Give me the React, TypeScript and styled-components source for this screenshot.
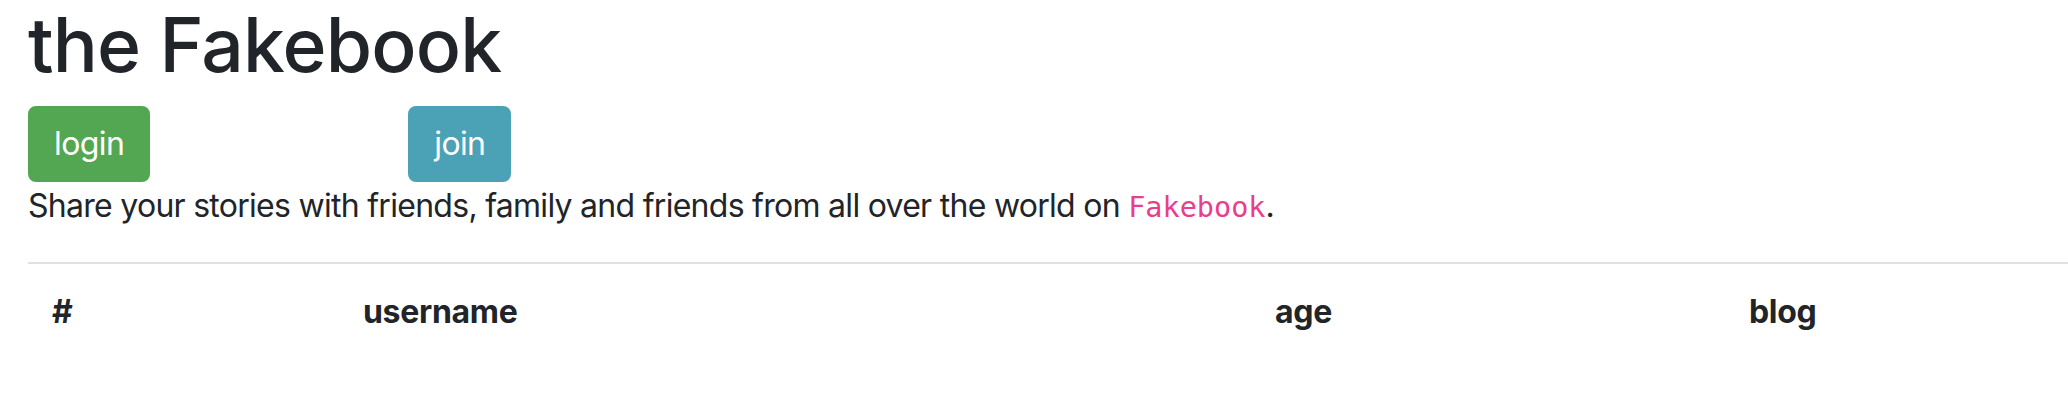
import React from "react";
import styled, { createGlobalStyle } from "styled-components";

const GlobalStyle = createGlobalStyle`
  html, body {
    margin: 0;
    padding: 0;
    background: #ffffff;
  }
  body {
    font-family: Inter, "Noto Sans", "Liberation Sans", sans-serif;
    font-size: 32px;
    line-height: 1.5;
    color: #212529;
  }
  * { box-sizing: border-box; }
`;

const Page = styled.main`
  padding: 0 0 0 28px;
`;

const Title = styled.h1`
  margin: 0 0 16px 0;
  font-size: 75px;
  line-height: 90px;
  font-weight: 500;
  letter-spacing: -0.8px;
  color: #212529;
`;

const Actions = styled.div`
  display: flex;
  align-items: flex-start;
  gap: 258px;
`;

const Button = styled.a<{ $tone: "success" | "info" }>`
  display: inline-block;
  padding: 12px 24px;
  border: 2px solid ${(p) => (p.$tone === "success" ? "#53a753" : "#4ba1b6")};
  border-radius: 8px;
  background: ${(p) => (p.$tone === "success" ? "#53a753" : "#4ba1b6")};
  color: #ffffff;
  font-size: 32px;
  line-height: 48px;
  font-weight: 400;
  letter-spacing: -0.6px;
  text-decoration: none;
  cursor: pointer;
`;

const Lead = styled.p`
  margin: 0 0 32px 0;
  font-size: 32px;
  line-height: 48px;
  letter-spacing: -0.72px;
`;

const Code = styled.code`
  font-family: "DejaVu Sans Mono", "Liberation Mono", monospace;
  font-size: 28.5px;
  line-height: 1;
  letter-spacing: 0;
  color: #e83e8c;
`;

const Table = styled.table`
  width: 100%;
  border-collapse: collapse;
  table-layout: fixed;
`;

const HeadCell = styled.th<{ $w?: number }>`
  ${(p) => (p.$w ? `width: ${p.$w}px;` : "")}
  padding: 24px;
  border-top: 2px solid #dee2e6;
  text-align: left;
  font-weight: 700;
  font-size: 32px;
  line-height: 48px;
  letter-spacing: -0.3px;
  vertical-align: bottom;
`;

export default function App() {
  return (
    <>
      <GlobalStyle />
      <Page>
        <Title>the Fakebook</Title>
        <Actions>
          <Button $tone="success">login</Button>
          <Button $tone="info">join</Button>
        </Actions>
        <Lead>
          Share your stories with friends, family and friends from all over the
          world on <Code>Fakebook</Code>.
        </Lead>
        <Table>
          <thead>
            <tr>
              <HeadCell $w={311}>#</HeadCell>
              <HeadCell $w={912}>username</HeadCell>
              <HeadCell $w={474}>age</HeadCell>
              <HeadCell>blog</HeadCell>
            </tr>
          </thead>
        </Table>
      </Page>
    </>
  );
}
